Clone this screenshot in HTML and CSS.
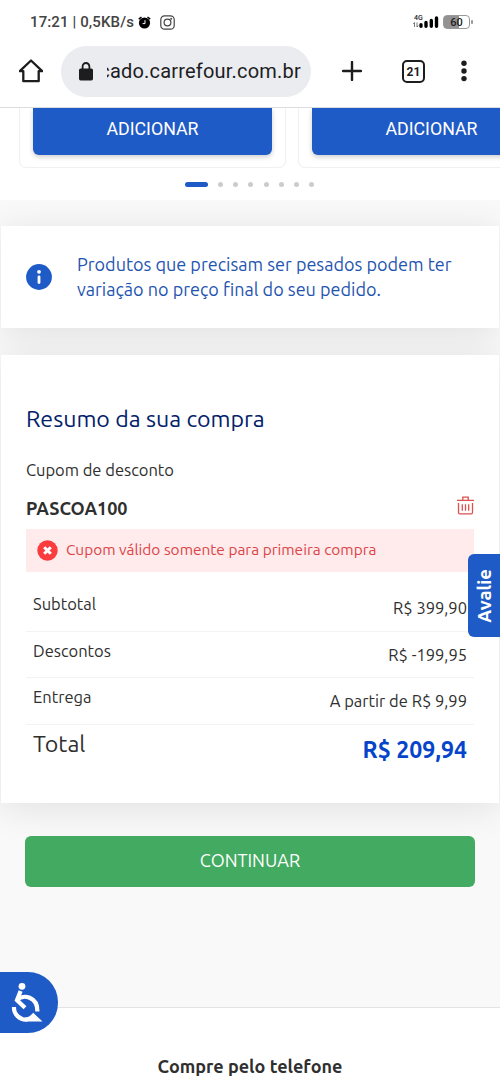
FILE: index.html
```html
<!DOCTYPE html>
<html lang="pt-BR">
<head>
<meta charset="utf-8">
<meta name="viewport" content="width=device-width">
<title>Carrefour</title>
<link rel="stylesheet" href="styles.css">
</head>
<body>
<header class="browser">
  <div class="status">
    <span class="clock">17:21 | 0,5KB/s</span>
    <svg class="alarm" width="13" height="13" viewBox="0 0 13 13"><circle cx="6.5" cy="7" r="5.6"/><path d="M.8 3.2 3.5 1M12.2 3.2 9.5 1" stroke="#000" stroke-width="1.5"/><path d="M7 4.2V7.6H4.6" fill="none" stroke="#fff"/></svg>
    <svg class="insta" width="15" height="15" viewBox="0 0 15 15" fill="none" stroke="#444" stroke-width="1.2"><rect x=".8" y=".8" width="13.4" height="13.4" rx="3.7"/><circle cx="7.5" cy="7.5" r="3.4"/><circle cx="11.2" cy="3.8" r=".4"/></svg>
    <div class="signal">
      <span class="net">4G</span>
      <svg width="26" height="13" viewBox="0 0 26 13"><path d="M1.5 6.5v4.5M4 6.5v4.5M.3 8 1.5 6.5M5.2 9.5 4 11" stroke="#555" stroke-width=".8" fill="none"/><path d="M8 8.7v1.5M13 6.5v3.7M18.3 4.5v5.7M23.5 2v8.2" stroke="#000" stroke-width="3.4" stroke-linecap="round"/></svg>
    </div>
    <div class="battery"><span>60</span></div>
  </div>
  <div class="toolbar">
    <svg class="home" width="24" height="24" viewBox="0 0 24 24" fill="none" stroke="#1d1d1f" stroke-width="2.3" stroke-linejoin="round"><path d="M.8 12.2H4.3V22.2H19.7V12.2H23.2L12 1.5Z"/></svg>
    <div class="address">
      <svg width="14" height="19" viewBox="0 0 14 19"><rect y="6.4" width="14" height="12" rx="1.6" fill="#1d1d1f"/><path d="M3.6 7V4.4a3.4 3.4 0 0 1 6.8 0V7" fill="none" stroke="#1d1d1f" stroke-width="1.8"/></svg>
      <div class="url"><span>cado.carrefour.com.br</span></div>
    </div>
    <svg class="plus" width="20" height="20" viewBox="0 0 20 20" stroke="#1d1d1f" stroke-width="2.4" stroke-linecap="round"><path d="M10 1v18M1 10h18"/></svg>
    <div class="tabs">21</div>
    <svg class="more" width="6" height="22" viewBox="0 0 6 22" fill="#1d1d1f"><circle cx="3" cy="3.2" r="2.7"/><circle cx="3" cy="11" r="2.7"/><circle cx="3" cy="18.6" r="2.7"/></svg>
  </div>
</header>
<main>
  <section class="carousel">
    <div class="track">
      <div class="product"><button class="add">ADICIONAR</button></div>
      <div class="product"><button class="add">ADICIONAR</button></div>
    </div>
    <div class="dots"><i class="active"></i><i></i><i></i><i></i><i></i><i></i><i></i><i></i></div>
  </section>
  <section class="card notice">
    <svg width="26" height="26" viewBox="0 0 26 26"><circle cx="13" cy="13" r="12.9" fill="#1f5bc6"/><circle cx="13" cy="7.8" r="1.9" fill="#fff"/><path d="M13 12.8v5.7" stroke="#fff" stroke-width="2.8" stroke-linecap="round"/></svg>
    <p>Produtos que precisam ser pesados podem ter<br>variação no preço final do seu pedido.</p>
  </section>
  <section class="card summary">
    <h2>Resumo da sua compra</h2>
    <p class="coupon-label">Cupom de desconto</p>
    <div class="coupon">
      <strong>PASCOA100</strong>
      <svg width="17" height="19" viewBox="0 0 17 19" fill="none" stroke="#dc504e" stroke-width="1.3"><path d="M0 4.3h17M5.8 4V1.2h5.4V4M1.5 7v9.5q0 1.4 1.4 1.4h11.2q1.4 0 1.4-1.4V7M5.3 8.2v6.5M8.5 8.2v6.5M11.7 8.2v6.5"/></svg>
    </div>
    <div class="error">
      <svg width="21" height="21" viewBox="0 0 21 21"><circle cx="10.5" cy="10.5" r="10.2" fill="#fb3c3e"/><path d="m7.2 7.2 6.6 6.6m0-6.6-6.6 6.6" stroke="#fff" stroke-width="3"/></svg>
      <span>Cupom válido somente para primeira compra</span>
    </div>
    <dl>
      <div class="row"><dt>Subtotal</dt><dd>R$ 399,90</dd></div>
      <div class="row"><dt>Descontos</dt><dd>R$ -199,95</dd></div>
      <div class="row"><dt>Entrega</dt><dd>A partir de R$ 9,99</dd></div>
      <div class="row total"><dt>Total</dt><dd>R$ 209,94</dd></div>
    </dl>
  </section>
  <button class="continue">CONTINUAR</button>
</main>
<footer><strong>Compre pelo telefone</strong></footer>
<div class="rate"><span>Avalie</span></div>
<div class="access">
  <svg width="32" height="42" viewBox="0 0 32 42" fill="none" stroke="#fff" stroke-width="4.2"><circle cx="11" cy="4.3" r="3.4" fill="#fff" stroke="none"/><path d="M9.6 9 6 18.2 14 25.8"/><path d="M6 18.2C12 11.5 26.8 14.5 26.4 29.5"/><path d="M3 25A12 12 0 0 0 16.5 37.5"/><path d="M14.5 35.4C18 35.2 20 33.2 22.2 30.8L31.5 39.6H14.5Z" fill="#fff" stroke="none"/></svg>
</div>
</body>
</html>
```
FILE: styles.css
```css
* { box-sizing: border-box; }
body { position: relative; margin: 0; width: 500px; height: 1083px; overflow: hidden; background: #f9f9f9; color: #2f2f2f; font-family: Ubuntu, "Noto Sans", sans-serif; font-size: 16.5px; }
p, h2, dl, dd { margin: 0; font-weight: 400; }
svg { display: block; flex: none; }
button { border: 0; color: #fff; padding: 0; }
.browser { position: relative; height: 108px; background: #fff; border-bottom: 1px solid #dadce0; font-family: Roboto, sans-serif; color: #1d1d1f; }
.status { display: flex; align-items: center; height: 44px; padding: 0 30px 0 30px; }
.clock { width: 105px; font-size: 15px; font-weight: 500; color: #444; white-space: nowrap; letter-spacing: .12px; }
.alarm { margin-left: 3px; }
.insta { margin-left: 9px; }
.signal { position: relative; margin-left: auto; padding-top: 1px; }
.net { position: absolute; left: 1px; top: -1px; font-size: 7px; line-height: 9px; font-weight: 500; }
.battery { position: relative; width: 27px; height: 14px; margin-left: 4px; border: 1.5px solid #999; border-radius: 4px; background: linear-gradient(90deg, #929292 58%, #fff 58%); font-size: 11px; font-weight: 500; line-height: 13px; text-align: center; }
.battery::after { content: ""; position: absolute; right: -4px; top: 4px; width: 2px; height: 4px; border-radius: 1px; background: #999; }
.toolbar { display: flex; align-items: center; height: 54px; padding: 0 33px 0 19px; }
.address { display: flex; align-items: center; width: 250px; height: 51px; margin-left: 18px; padding-left: 18px; border-radius: 26px; background: #ebecf0; }
.url { display: flex; justify-content: flex-end; width: 194px; margin-left: 14px; overflow: hidden; }
.url span { flex: none; font-size: 20px; line-height: 28px; letter-spacing: .2px; }
.plus { margin-left: 31px; }
.tabs { width: 23px; height: 23px; margin-left: 40px; border: 2px solid #1d1d1f; border-radius: 5px; font-size: 12px; font-weight: 700; line-height: 20px; text-align: center; }
.more { margin-left: auto; }
.carousel { position: relative; z-index: 1; height: 92px; background: #fff; overflow: hidden; }
.track { display: flex; gap: 12px; width: 566px; padding-left: 19px; }
.product { width: 267px; height: 60px; padding: 0 13px; border: 1px solid #f0f0f0; border-top: 0; border-radius: 0 0 7px 7px; }
.add { display: block; width: 239px; height: 47px; border-radius: 0 0 6px 6px; background: #1f5bc6; box-shadow: 0 2px 5px #0003; font: 17.8px/42px Roboto, sans-serif; padding-bottom: 5px; }
.dots { display: flex; justify-content: center; gap: 10.2px; padding: 14px 1px 0 0; }
.dots i { width: 5px; height: 5px; border-radius: 3px; background: #ccc; }
.dots .active { width: 23px; background: #1f5bc6; }
.card { position: relative; margin: 0 1px; background: #fff; box-shadow: 0 5px 36px rgba(0,0,0,.1); }
.notice { display: flex; align-items: center; height: 102px; margin-top: 26px; padding-left: 25px; gap: 25px; color: #1f55b0; font-size: 18.03px; line-height: 25px; white-space: nowrap; }
.summary { height: 447.5px; margin-top: 27px; padding: 43px 25px 0; }
h2 { font-size: 23.15px; line-height: 40px; color: #03206b; }
.coupon-label { margin-top: 19px; line-height: 26px; }
.coupon { display: flex; justify-content: space-between; align-items: center; height: 46px; padding-top: 3px; font-size: 18px; }
.coupon svg { margin-top: -5px; }
.error { display: flex; align-items: center; gap: 8px; height: 43px; padding-left: 11px; background: #ffeaec; color: #dc4446; font-size: 15.45px; white-space: nowrap; }
.error span { padding-bottom: 2px; }
dl { padding-top: 13px; }
.row { display: flex; justify-content: space-between; height: 46.7px; padding: 6px 7px 0; border-bottom: 1px solid #f3f3f3; line-height: 26px; white-space: nowrap; }
.row dd { padding-top: 4px; }
.row.total { height: 60px; padding-top: 5px; border: 0; font-size: 23.2px; }
.total dd { padding-top: 6px; color: #0645ca; font-size: 23.1px; font-weight: 700; }
.continue { position: relative; display: block; width: 450px; height: 51px; margin: 33px 0 0 25px; border-radius: 6px; background: #42aa61; font: 18px/48px Ubuntu, "Noto Sans", sans-serif; padding-bottom: 2px; }
footer { height: 76px; margin-top: 120.5px; padding-top: 45px; background: #fff; border-top: 1px solid #e3e3e3; text-align: center; line-height: 26px; font-size: 18px; }
.rate { position: absolute; right: 0; top: 554px; display: flex; align-items: center; justify-content: center; width: 32px; height: 83px; border-radius: 6px 0 0 6px; background: #1f5bc6; color: #fff; font-size: 18.5px; font-weight: 700; }
.rate span { writing-mode: vertical-rl; transform: rotate(180deg); }
.access { position: absolute; left: 0; top: 972px; width: 58px; height: 61px; padding: 10px 0 0 11px; border-radius: 0 30px 30px 0; background: #1f5bc6; }
```
